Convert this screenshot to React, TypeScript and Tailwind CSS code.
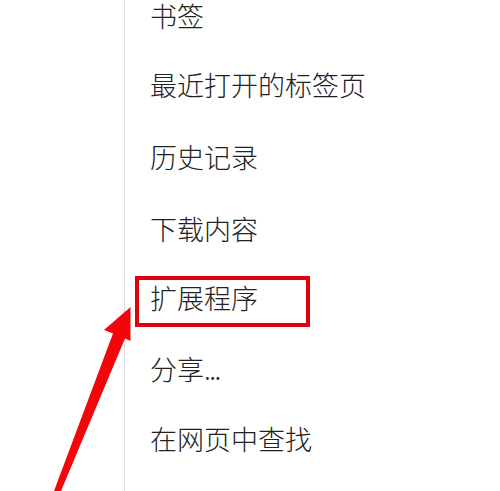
import React from "react";

const items: { label: React.ReactNode; key: string; cls: string }[] = [
  { key: "bm", label: "书签", cls: "mt-[2px]" },
  { key: "recent", label: "最近打开的标签页", cls: "mt-[42px]" },
  { key: "hist", label: "历史记录", cls: "mt-[45px]" },
  { key: "dl", label: "下载内容", cls: "mt-[45px]" },
  { key: "ext", label: "扩展程序", cls: "mt-[42px]" },
  {
    key: "share",
    label: (
      <>
        分享<span className="tracking-[-1.5px]">...</span>
      </>
    ),
    cls: "mt-[44px]",
  },
  { key: "find", label: "在网页中查找", cls: "mt-[43px]" },
];

export default function App() {
  return (
    <div
      className="relative w-[500px] h-[491px] overflow-hidden bg-white text-[#222222]"
      style={{ fontFamily: '"Noto Sans CJK SC", "Noto Sans", sans-serif' }}
    >
      <div className="flex h-full">
        <div className="w-[124px] shrink-0" />
        <div className="flex-1 border-l border-[#dedede] pl-[25px]">
          <div className="flex flex-col font-light">
            {items.map((it) => (
              <div
                key={it.key}
                className={`text-[27px] leading-[27px] whitespace-nowrap ${it.cls}`}
              >
                {it.label}
              </div>
            ))}
          </div>
        </div>
      </div>

      <div className="absolute left-[135px] top-[276px] w-[175px] h-[51px] border-[4px] border-[#e0000f]" />

      <svg className="absolute left-0 top-0" width="500" height="491" viewBox="0 0 500 491">
        <polygon
          points="130.5,307 130.5,341 125,338.5 61,491 54,491 113,333.5 104,330"
          fill="#f2060a"
        />
      </svg>
    </div>
  );
}
